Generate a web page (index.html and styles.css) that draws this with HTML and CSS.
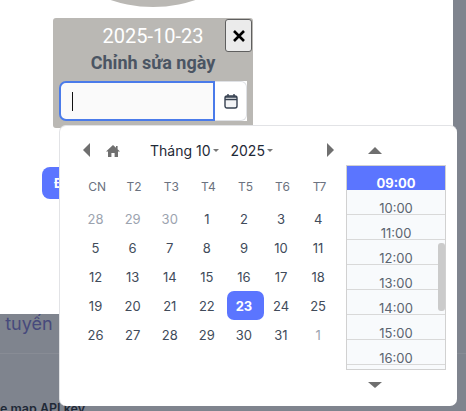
FILE: index.html
```html
<!DOCTYPE html>
<html lang="vi">
<head>
<meta charset="utf-8">
<title>Chỉnh sửa ngày</title>
<link rel="stylesheet" href="styles.css">
</head>
<body>
<div class="page">
  <main class="panel">
    <div class="avatar"></div>
    <section class="modal">
      <button class="close" type="button" aria-label="Đóng">
        <svg viewBox="0 0 14 14" width="14" height="14"><path d="M2 2 12 12M12 2 2 12"/></svg>
      </button>
      <div class="date">2025-10-23</div>
      <h2 class="heading">Chỉnh sửa ngày</h2>
      <div class="field">
        <div class="input"><span class="caret"></span></div>
        <div class="addon">
          <svg viewBox="0 0 14 16" width="14" height="16"><rect x="1" y="3" width="12" height="12" rx="2"/><path class="bar" d="M1 6.5h12M1 4h12"/><path d="M4 1v2.5M10 1v2.5"/></svg>
        </div>
      </div>
    </section>
    <button class="action" type="button">Đ</button>
  </main>
  <div class="under">
    <div class="route">y tuyến</div>
    <div class="rule"></div>
    <div class="key">e map API key</div>
  </div>

  <div class="picker">
    <div class="calendar">
      <div class="nav">
        <span class="arrow-left"></span>
        <svg class="home" viewBox="0 0 14 12" width="14" height="12"><path d="M7 0 0 6.4h2V12h3.4V8h3.2v4H12V6.4h2L11.6 4.2V1H10v1.7z"/></svg>
        <span class="select month">Tháng 10<i class="drop"></i></span>
        <span class="select year">2025<i class="drop"></i></span>
        <span class="arrow-right"></span>
      </div>
      <div class="grid">
        <span class="wd">CN</span><span class="wd">T2</span><span class="wd">T3</span><span class="wd">T4</span><span class="wd">T5</span><span class="wd">T6</span><span class="wd">T7</span>
        <span class="day muted">28</span><span class="day muted">29</span><span class="day muted">30</span><span class="day">1</span><span class="day">2</span><span class="day">3</span><span class="day">4</span>
        <span class="day">5</span><span class="day">6</span><span class="day">7</span><span class="day">8</span><span class="day">9</span><span class="day">10</span><span class="day">11</span>
        <span class="day">12</span><span class="day">13</span><span class="day">14</span><span class="day">15</span><span class="day">16</span><span class="day">17</span><span class="day">18</span>
        <span class="day">19</span><span class="day">20</span><span class="day">21</span><span class="day">22</span><span class="day selected">23</span><span class="day">24</span><span class="day">25</span>
        <span class="day">26</span><span class="day">27</span><span class="day">28</span><span class="day">29</span><span class="day">30</span><span class="day">31</span><span class="day muted">1</span>
      </div>
    </div>
    <div class="times">
      <span class="arrow-up"></span>
      <div class="list">
        <div class="time active">09:00</div>
        <div class="time">10:00</div>
        <div class="time">11:00</div>
        <div class="time">12:00</div>
        <div class="time">13:00</div>
        <div class="time">14:00</div>
        <div class="time">15:00</div>
        <div class="time">16:00</div>
        <div class="time"></div>
        <span class="thumb"></span>
      </div>
      <span class="arrow-down"></span>
    </div>
  </div>
</div>
</body>
</html>
```
FILE: styles.css
```css
* { box-sizing: border-box; }
html, body { margin: 0; height: 100%; overflow: hidden; }
body { background: #7f848e; font-family: "Inter", "Liberation Sans", sans-serif; }

.page { position: relative; width: 466px; height: 411px; overflow: hidden; }

.panel {
  position: relative;
  width: 453px;
  height: 314px;
  background: #fff;
  padding: 18px 0 0 53px;
  overflow: hidden;
}

.avatar {
  position: absolute;
  left: 21px;
  top: -257px;
  width: 264px;
  height: 264px;
  border-radius: 50%;
  background: #bab8b4;
}

.modal {
  position: relative;
  width: 200px;
  height: 110px;
  background: #bab8b4;
  border-radius: 3px;
  padding: 6px 6px 0;
  text-align: center;
  font-family: "Roboto", "Liberation Sans", sans-serif;
}

.close {
  position: absolute;
  top: 1px;
  right: 1px;
  width: 27px;
  height: 33px;
  padding: 0;
  display: flex;
  align-items: center;
  justify-content: center;
  background: #ebebeb;
  border: 1px solid #5f5f5f;
  border-radius: 3px;
}
.close svg { fill: none; stroke: #000; stroke-width: 2.6; }

.date { color: #fff; font-size: 20px; line-height: 24px; height: 24px; }

.heading {
  margin: 2px 0 0;
  color: #4b5563;
  font-size: 18px;
  font-weight: 700;
  line-height: 26px;
  height: 26px;
}

.field {
  display: flex;
  width: 188px;
  height: 40px;
  margin-top: 5px;
  background: linear-gradient(90deg, transparent 156px, #fff 156px);
}

.input {
  width: 156px;
  height: 40px;
  background: #fafafa;
  border: 2px solid #4a7bea;
  border-radius: 7px 0 0 7px;
  display: flex;
  align-items: center;
  padding-left: 11px;
}
.caret { width: 1px; height: 19px; background: #111; }

.addon {
  flex: 1;
  background: #fff;
  border: 1px solid #dfe1e5;
  border-left: 0;
  border-radius: 0 6px 6px 0;
  display: flex;
  align-items: center;
  justify-content: center;
}
.addon svg { fill: #f3f4f6; stroke: #374151; stroke-width: 1.4; }
.addon .bar { fill: none; stroke-width: 1.6; }

.action {
  display: block;
  width: 40px;
  height: 32px;
  margin: 39px 0 0 -11px;
  padding: 0 0 0 12px;
  border: 0;
  border-radius: 8px;
  background: #5b75ff;
  color: #fff;
  font: 700 13px "Inter", sans-serif;
  text-align: left;
}

.under { height: 97px; overflow: hidden; }
.route {
  color: #474a7c;
  font-size: 18px;
  line-height: 20px;
  margin-top: 0;
  height: 28px;
  white-space: nowrap;
  text-indent: -10px;
}
.rule { height: 1px; background: #888c95; margin-top: 11px; }
.key {
  margin-top: 48px;
  color: #1f2937;
  font-size: 12.5px;
  font-weight: 600;
  line-height: 14px;
  white-space: nowrap;
}

.picker {
  position: absolute;
  left: 59px;
  top: 125px;
  width: 398px;
  height: 281px;
  background: #fff;
  border: 1px solid #e2e3e6;
  border-right: 0;
  border-bottom: 0;
  border-radius: 7px;
  display: flex;
  color: #374151;
}

.calendar { width: 286px; padding: 15px 0 0 18.5px; }

.nav { position: relative; display: flex; align-items: center; height: 18px; width: 260px; font-size: 14px; color: #1f2937; }
.arrow-left {
  width: 0; height: 0;
  margin-left: 4.5px;
  border-style: solid;
  border-width: 7px 7px 7px 0;
  border-color: transparent #6f6f6f transparent transparent;
}
.home { margin: 2px 0 0 16px; fill: #6f6f6f; }
.select { display: inline-flex; align-items: center; white-space: nowrap; }
.month { margin-left: 30px; }
.year { margin-left: 12px; }
.drop {
  width: 0; height: 0;
  margin-left: 2px;
  border-style: solid;
  border-width: 3px 3px 0;
  border-color: #777 transparent transparent;
}
.arrow-right {
  width: 0; height: 0;
  margin-left: auto;
  margin-right: 5px;
  border-style: solid;
  border-width: 7px 0 7px 7px;
  border-color: transparent transparent transparent #6f6f6f;
}

.grid {
  display: grid;
  grid-template-columns: repeat(7, 37.1px);
  grid-template-rows: 38px repeat(5, 29px);
  margin-top: 7px;
  align-items: center;
  justify-items: center;
}
.wd { font-size: 12px; color: #6b7280; padding-top: 2px; }
.day {
  width: 100%;
  height: 29px;
  display: flex;
  align-items: center;
  justify-content: center;
  padding-right: 3px;
  font-size: 13px;
  color: #414b5a;
}
.day.muted { color: #9ca3af; }
.day.selected { background: #5b75ff; color: #fff; font-weight: 700; border-radius: 7px; }

.times { width: 100px; display: flex; flex-direction: column; align-items: flex-start; padding-top: 21px; }
.arrow-up, .arrow-down { width: 0; height: 0; border-style: solid; margin-left: 22px; }
.arrow-up { border-width: 0 7px 7px; border-color: transparent transparent #6f6f6f; }
.arrow-down { border-width: 6px 7px 0; border-color: #6f6f6f transparent transparent; margin-top: 12px; }

.list {
  position: relative;
  width: 100px;
  height: 205px;
  margin-top: 11px;
  border: 1px solid #d1d1d1;
  background: #f8fafc;
  overflow: hidden;
  flex: none;
}
.time {
  height: 25px;
  border-bottom: 1px solid #d9d9d9;
  font-family: "Inter", sans-serif;
  font-size: 13px;
  line-height: 17px;
  padding-top: 10px;
  text-align: center;
  color: #5b6470;
}
.time.active { height: 24px; background: #5b75ff; color: #fff; font-weight: 700; border: 0; padding-top: 9px; }
.thumb {
  position: absolute;
  left: 91px;
  top: 77px;
  width: 7px;
  height: 68px;
  background: #cbcbcb;
  border-radius: 3px;
}
```
